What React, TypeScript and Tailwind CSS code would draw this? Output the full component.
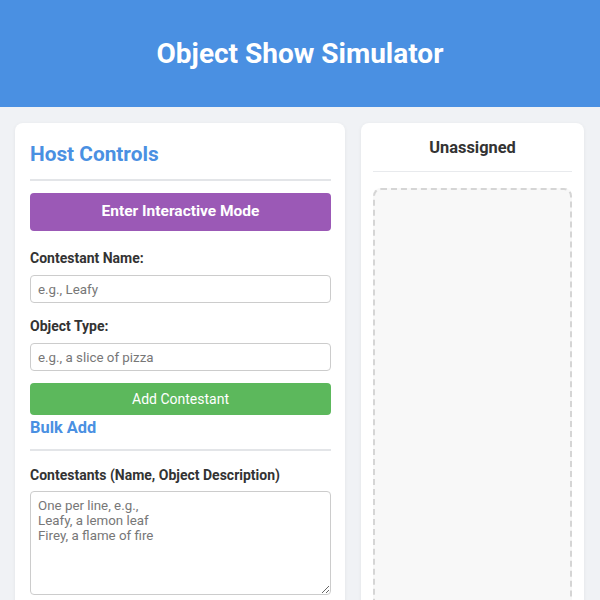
import { useState } from "react"

const Field = ({ label, placeholder }: { label: string; placeholder: string }) => (
  <div className="flex flex-col">
    <label className="text-[14px] font-bold text-[#333] leading-[17px] mb-[8px]">{label}</label>
    <input
      placeholder={placeholder}
      className="h-[28px] w-full rounded-[4px] border border-[#ccc] px-[7px] text-[13.33px] text-[#333] placeholder:text-[#777] outline-none"
    />
  </div>
)

const App = () => {
  const [bulk, setBulk] = useState("")

  return (
    <div className="min-h-[600px] bg-[#f0f2f5] font-['Roboto',sans-serif]">
      <header className="h-[107px] bg-[#4a90e2] flex items-center justify-center">
        <h1 className="text-[28px] font-bold text-white">Object Show Simulator</h1>
      </header>

      <main className="grid grid-cols-[330px_223px] gap-[16px] px-[15px] pt-[16px]">
        {/* host panel */}
        <section className="rounded-[8px] bg-white pl-[15px] pr-[14px] pt-[17px] pb-[20px] shadow-[0_1px_4px_rgba(0,0,0,0.06)]">
          <h2 className="text-[20.8px] font-bold text-[#4a90e2] leading-[28px]">Host Controls</h2>
          <div className="mt-[11px] h-[2px] bg-[#e3e5e8]" />

          <button className="mt-[12px] h-[38px] w-full rounded-[4px] bg-[#9b59b6] text-[15.5px] font-bold text-white">
            Enter Interactive Mode
          </button>

          <div className="mt-[19px] flex flex-col gap-[15px]">
            <Field label="Contestant Name:" placeholder="e.g., Leafy" />
            <Field label="Object Type:" placeholder="e.g., a slice of pizza" />
          </div>

          <button className="mt-[12px] h-[32px] w-full rounded-[4px] bg-[#5cb85c] text-[14px] text-white">
            Add Contestant
          </button>

          <h3 className="mt-[2px] text-[16.4px] font-bold text-[#4a90e2] leading-[22px]">Bulk Add</h3>
          <div className="mt-[10px] h-[2px] bg-[#e3e5e8]" />

          <label className="mt-[16px] block text-[14px] font-bold text-[#333] leading-[17px]">
            Contestants (Name, Object Description)
          </label>
          <textarea
            value={bulk}
            onChange={(e) => setBulk(e.target.value)}
            placeholder={"One per line, e.g.,\nLeafy, a lemon leaf\nFirey, a flame of fire"}
            className="mt-[7px] block h-[104px] w-full rounded-[4px] border border-[#ccc] px-[7px] pt-[6px] pb-[5px] text-[13.33px] leading-[15px] text-[#333] placeholder:text-[#777] outline-none"
          />
        </section>

        {/* unassigned pool */}
        <section className="rounded-[8px] bg-white px-[12px] pt-[15px] shadow-[0_1px_4px_rgba(0,0,0,0.06)] flex flex-col">
          <h2 className="text-center text-[16.4px] font-bold text-[#333] leading-[20px]">Unassigned</h2>
          <div className="mt-[13px] h-px bg-[#e8eaed]" />
          <div className="mt-[16px] h-[420px] rounded-[8px] border-2 border-dashed border-[#d5d5d5] bg-[#f8f8f8]" />
        </section>
      </main>
    </div>
  )
}

export default App
